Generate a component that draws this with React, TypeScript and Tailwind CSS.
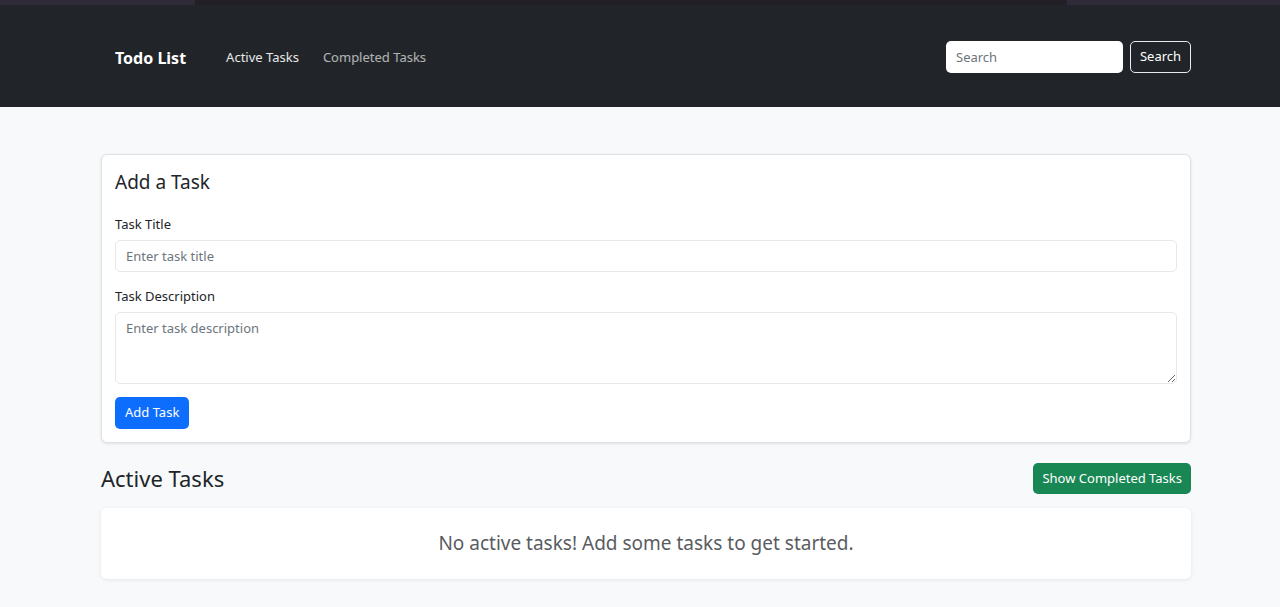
export default function App() {
  return (
    <div className="min-h-[607px] bg-[#f8f9fa] font-['Noto_Sans',sans-serif] text-[#212529]">
      {/* browser strip */}
      <div className="flex h-[5px] bg-[#2e2a37]">
        <div className="ml-[195px] w-[872px] bg-[#231f27]" />
      </div>
      <nav className="h-[102px] bg-[#212529] flex items-center pt-[2px] pl-[115px] pr-[89px]">
        <div className="flex items-center pt-[2px]">
          <span className="text-[16px] font-bold text-white mr-[40px]">Todo List</span>
          <a className="text-[13px] text-white/90 mr-[24px]">Active Tasks</a>
          <a className="text-[13px] text-white/65">Completed Tasks</a>
        </div>
        <div className="ml-auto flex items-center gap-[7px]">
          <input
            placeholder="Search"
            className="w-[177px] h-[32px] rounded-[5px] bg-white px-[10px] text-[13px] outline-none placeholder:text-[#6c757d]"
          />
          <button className="w-[61px] h-[32px] rounded-[5px] border border-[#e9ecef] text-white text-[13px]">
            Search
          </button>
        </div>
      </nav>

      <main className="pl-[101px] pr-[89px] pt-[47px]">
        <section className="bg-white border border-[#dfe2e5] rounded-[6px] shadow-[0_1px_3px_rgba(0,0,0,0.1)] px-[13px] pt-[14px] pb-[13px]">
          <h4 className="text-[19px] leading-[26px] mb-[19px]">Add a Task</h4>
          <label className="block text-[13px] leading-[20px] mb-[6px]">Task Title</label>
          <input
            placeholder="Enter task title"
            className="w-full h-[32px] border border-[#e6e8ea] rounded-[5px] px-[10px] text-[13px] outline-none placeholder:text-[#6c757d]"
          />
          <label className="block text-[13px] leading-[20px] mt-[14px] mb-[6px]">Task Description</label>
          <textarea
            placeholder="Enter task description"
            className="block w-full h-[72px] border border-[#e6e8ea] rounded-[5px] px-[10px] py-[6px] text-[13px] outline-none placeholder:text-[#6c757d]"
          />
          <button className="mt-[13px] h-[32px] px-[10px] rounded-[5px] bg-[#0d6efd] text-white text-[13px]">
            Add Task
          </button>
        </section>

        <div className="flex items-center justify-between mt-[20px] mb-[14px]">
          <h3 className="text-[22px] leading-[31px]">Active Tasks</h3>
          <button className="h-[31px] px-[9px] rounded-[5px] bg-[#198754] text-white text-[13px]">
            Show Completed Tasks
          </button>
        </div>

        <div className="bg-white rounded-[6px] shadow-[0_1px_4px_rgba(0,0,0,0.08)] h-[71px] flex items-center justify-center">
          <p className="text-[19px] text-[#595c5f]">No active tasks! Add some tasks to get started.</p>
        </div>
      </main>
    </div>
  );
}
